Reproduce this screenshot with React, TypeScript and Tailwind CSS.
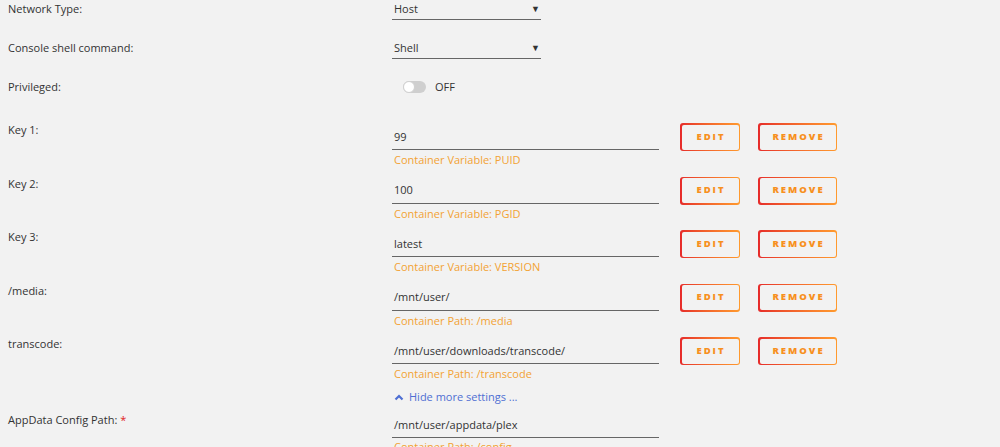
import React from 'react';

type Row = {
  label: string;
  value: string;
  hint: string;
};

const rows: Row[] = [
  { label: 'Key 1:', value: '99', hint: 'Container Variable: PUID' },
  { label: 'Key 2:', value: '100', hint: 'Container Variable: PGID' },
  { label: 'Key 3:', value: 'latest', hint: 'Container Variable: VERSION' },
  { label: '/media:', value: '/mnt/user/', hint: 'Container Path: /media' },
  { label: 'transcode:', value: '/mnt/user/downloads/transcode/', hint: 'Container Path: /transcode' },
];

function GradButton({ text, width }: { text: string; width: string }) {
  return (
    <div className={`${width} h-[28px] rounded-[3px] bg-gradient-to-r from-[#e62a2a] to-[#ff9a2e] p-[1.5px]`}>
      <div className="flex h-full w-full items-center justify-center rounded-[2px] bg-[#f2f2f2] pl-[2px] text-[9.5px] font-extrabold tracking-[2px] text-[#f7901e]">
        {text}
      </div>
    </div>
  );
}

function Select({ value }: { value: string }) {
  return (
    <div className="flex h-[19px] w-[149px] items-start justify-between border-b border-[#666] pl-[2px] pr-[1px] leading-[16px]">
      <span>{value}</span>
      <span className="text-[9px] leading-[16px]">▼</span>
    </div>
  );
}

function ParamRow({ row }: { row: Row }) {
  return (
    <div className="flex h-[53.5px]">
      <div className="w-[392px] pl-[8px] pt-[1px] leading-[16px]">{row.label}</div>
      <div className="w-[267px]">
        <div className="mt-[7.5px] border-b border-[#666] pb-[4.5px] pl-[2px] leading-[16px]">{row.value}</div>
        <div className="mt-[2px] pl-[2px] leading-[16px] text-[#f3a234]">{row.hint}</div>
      </div>
      <div className="ml-[21px] mt-[2px] flex gap-[18px]">
        <GradButton text="EDIT" width="w-[60px]" />
        <GradButton text="REMOVE" width="w-[79px]" />
      </div>
    </div>
  );
}

export default function App() {
  return (
    <div className="h-[447px] w-[1000px] overflow-hidden bg-[#f2f2f2] pt-[1px] font-['Open_Sans',sans-serif] text-[11px] text-[#333]">
      <div className="flex h-[39px]">
        <div className="w-[392px] pl-[8px] leading-[16px]">Network Type:</div>
        <Select value="Host" />
      </div>
      <div className="flex h-[39px]">
        <div className="w-[392px] pl-[8px] leading-[16px]">Console shell command:</div>
        <Select value="Shell" />
      </div>
      <div className="flex h-[42px]">
        <div className="w-[392px] pl-[8px] leading-[16px]">Privileged:</div>
        <div className="ml-[11px] flex h-[16px] items-center gap-[9px]">
          <div className="relative h-[12px] w-[23px] rounded-full bg-[#cfcfcf]">
            <div className="absolute left-0 top-0 h-[12px] w-[12px] rounded-full border border-[#d0d0d0] bg-white"></div>
          </div>
          <span className="leading-[16px]">OFF</span>
        </div>
      </div>

      {rows.map((row) => (
        <ParamRow key={row.label} row={row} />
      ))}

      <div className="flex h-[16px]">
        <div className="w-[392px]"></div>
        <div className="flex items-center gap-[5px] pl-[2px] text-[#4f6fd3] leading-[16px]">
          <svg width="10" height="8" viewBox="0 0 10 8">
            <polyline points="1.5,6.5 5,3 8.5,6.5" fill="none" stroke="#4f6fd3" strokeWidth="2.2" />
          </svg>
          <span>Hide more settings ...</span>
        </div>
      </div>

      <div className="mt-[6.5px] flex">
        <div className="w-[392px] pl-[8px] pt-[1px] leading-[16px]">
          AppData Config Path: <span className="text-[#e02020]">*</span>
        </div>
        <div className="w-[267px]">
          <div className="mt-[6px] border-b border-[#666] pb-[3.5px] pl-[2px] leading-[16px]">/mnt/user/appdata/plex</div>
          <div className="mt-[1px] pl-[2px] leading-[16px] text-[#f3a234]">Container Path: /config</div>
        </div>
      </div>
    </div>
  );
}
